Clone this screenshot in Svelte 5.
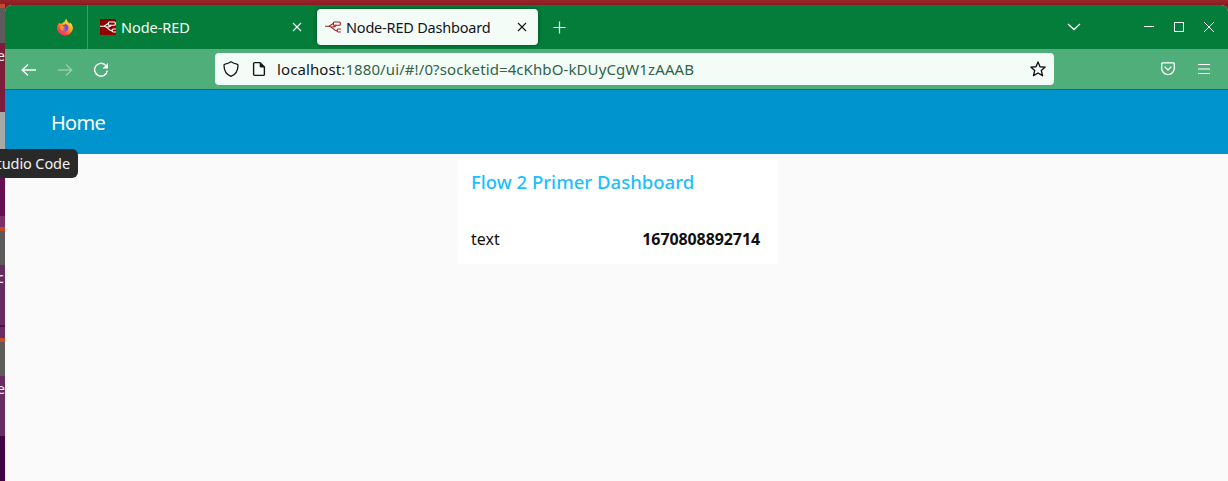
<script>
  const url = { host: 'localhost', rest: ':1880/ui/#!/0?socketid=4cKhbO-kDUyCgW1zAAAB' };
  const edge = [
    ['#8f2127', 4], ['#c9472a', 4], ['#5f5b5a', 35], ['#7e1c3c', 69, 'e'], ['#aaa8a5', 37],
    ['#302330', 29], ['#640f4f', 38], ['#7b3067', 11], ['#c84525', 4], ['#5d5b59', 34],
    ['#672b62', 60, 'c'], ['#461544', 2], ['#6c2b62', 11], ['#c84b2b', 4], ['#5d5c59', 34],
    ['#672c62', 60, 'e'], ['#420543', 45]
  ];
</script>

{#snippet flow(color)}
  <svg class="flow" width="16" height="16" viewBox="0 0 16 16" fill="none" stroke={color} stroke-width="1.15">
    <path d="M0 7.2h3.6C6.2 7.2 6 4.600 8.700 4.600M3.600 7.200c4.400 0 4.500 4.700 8.600 4.700" />
    <rect x="8.300" y="3" width="7" height="3.200" rx="1" />
    <path d="M5.800 8c2.800.2 4.800-.2 5.600-2M16 10h-2.700c-1.600 0-1.600 3 0 3H16" />
  </svg>
{/snippet}

{#snippet close()}
  <svg width="10" height="10" viewBox="0 0 10 10" fill="none" stroke="currentColor" stroke-width="1.1"><path d="m1 1 8 8M9 1 1 9" /></svg>
{/snippet}

<div class="desktop">
  <div class="edge">
    {#each edge as [color, size, letter]}
      <div class="slice" style="background:{color};height:{size}px"><span>{letter ?? ''}</span></div>
    {/each}
  </div>

  <div class="window">
    <div class="tabs">
      <div class="pinned">
        <svg width="16" height="17" viewBox="0 0 16 17">
          <defs>
            <linearGradient id="flame" x1=".85" y1=".1" x2=".2" y2=".95"><stop stop-color="#ffee42" /><stop offset=".4" stop-color="#ffa41f" /><stop offset=".75" stop-color="#ff4a48" /><stop offset="1" stop-color="#e52880" /></linearGradient>
          </defs>
          <path fill="url(#flame)" d="M2.4 3.4c.4 1 .9 1.3 1.5 1.3.5-.4 1-.5 1.7-.6C6.2 3.2 7 2.7 7.7 2.6c.2-1 .9-2 2-2.5-.1 2 1.200 2.600 2 3.600l.5 1.300.6-1.500c2 1.300 3.200 3.400 3.100 6A7.900 7.900 0 0 1 8 16.600C3.600 16.600.1 13.400.1 9.100c0-2.200.8-4.200 2.300-5.700Z" />
          <path fill="#7846d8" d="M5 7.600c.5-1.100 1.700-1.800 3-1.800l-.6-.9c2-.2 4.200 1.300 4.100 3.900 0 2-1.500 3.600-3.700 3.600-1.800 0-3-1.100-3.200-2.500l2.600-.3 1.300-.9Z" />
          <path fill="#ff9b22" d="M3 6.700c1.600-.5 2.700.1 3 .8l1.700.1c-.2.9-1.700 1.100-1.800 1.900 0 1 1.800 1.400 3 .6-1 2.200-4.800 1.900-5.600-.4Z" />
        </svg>
      </div>
      <div class="tab first">
        <span class="redicon">{@render flow('#fff')}</span>
        <span class="title t1">Node-RED</span>
        <span class="x">{@render close()}</span>
      </div>
      <div class="tab active">
        <span class="plainicon">{@render flow('#a52026')}</span>
        <span class="title t2">Node-RED Dashboard</span>
        <span class="x">{@render close()}</span>
      </div>
      <svg class="plus" width="13" height="13" viewBox="0 0 13 13" stroke="#fff" stroke-width="1.2"><path d="M6.500.5v12M.5 6.500h12" /></svg>
      <div class="controls">
        <svg width="14" height="10" viewBox="0 0 14 10" fill="none" stroke="#fff" stroke-width="1.3"><path d="m1 2 6 5.600L13 2" /></svg>
        <svg class="min" width="10" height="10" viewBox="0 0 10 10" stroke="#fff"><path d="M0 4.500h10" /></svg>
        <svg class="max" width="10" height="10" viewBox="0 0 10 10" fill="none" stroke="#fff"><path d="M.5.5h9v9h-9z" /></svg>
        <svg class="end" width="10" height="10" viewBox="0 0 10 10" stroke="#fff"><path d="m0 0 10 10M10 0 0 10" /></svg>
      </div>
    </div>

    <div class="toolbar">
      <div class="nav">
        <svg width="16" height="16" viewBox="0 0 16 16" fill="none" stroke="#fff" stroke-width="1.3"><path d="M15 8H1.500M7 2.500 1.200 8 7 13.500" /></svg>
        <svg class="dim" width="16" height="16" viewBox="0 0 16 16" fill="none" stroke="#fff" stroke-width="1.300"><path d="M1 8h13.500M9 2.500 14.800 8 9 13.500" /></svg>
        <svg width="16" height="16" viewBox="0 0 16 16"><path d="M12.700 3.400A6.400 6.400 0 1 0 14.300 8.700" fill="none" stroke="#fff" stroke-width="1.400" /><path d="M15 1v5.500H9.500Z" fill="#fff" /></svg>
      </div>
      <div class="address">
        <svg width="16" height="16" viewBox="0 0 16 16" fill="none" stroke="#15141a" stroke-width="1.300" stroke-linejoin="round"><path d="M8 .8c-1.800 1.300-4.200 2.100-6 2.300-.6 0-1 .5-1 1.100C1 9.900 3.600 13.600 8 15.400c4.400-1.800 7-5.500 7-11.200 0-.6-.4-1.100-1-1.100C12.200 2.900 9.800 2.100 8 .8Z" /></svg>
        <svg class="page" width="14" height="16" viewBox="0 0 14 16"><path d="M2.800 1.600H8L12.400 6v7.200c0 .7-.5 1.200-1.200 1.200H2.800c-.7 0-1.200-.5-1.200-1.200V2.800c0-.7.5-1.200 1.200-1.200Z" fill="none" stroke="#15141a" stroke-width="1.400" /><path d="M7.700 1.200 13 6.500H8.900c-.7 0-1.200-.5-1.200-1.200Z" fill="#15141a" /></svg>
        <span class="url"><b>{url.host}</b>{url.rest}</span>
        <svg class="star" width="16" height="16" viewBox="0 0 16 16" fill="none" stroke="#15141a" stroke-width="1.400" stroke-linejoin="round"><path d="m8 1 2 4.700 5.200.4-3.900 3.500 1.200 5.100L8 12l-4.500 2.700 1.200-5.100L.8 6.100 6 5.700Z" /></svg>
      </div>
      <div class="tools">
        <svg width="14" height="14" viewBox="0 0 14 14" fill="none" stroke="#fff" stroke-width="1.300" stroke-linecap="round" stroke-linejoin="round"><path d="M1.700.8h10.600c.6 0 1 .4 1 1v4.400c0 3.600-2.800 6.400-6.300 6.400S.7 9.800.7 6.200V1.800c0-.6.4-1 1-1ZM4 5l3 3 3-3" /></svg>
        <svg width="12" height="12" viewBox="0 0 12 12" stroke="#fff" stroke-width="1.200"><path d="M0 1.500h12M0 6h12M0 10.500h12" /></svg>
      </div>
    </div>

    <header><h1>Home</h1></header>
    <main>
      <section>
        <h2>Flow 2 Primer Dashboard</h2>
        <div class="row"><span class="label">text</span><strong>1670808892714</strong></div>
      </section>
    </main>
  </div>
  <div class="tip"><span>tudio Code</span></div>
</div>

<style>
  :global(body) { margin: 0; }
  .desktop { box-sizing: border-box; position: relative; display: flex; width: 1228px; height: 481px; overflow: hidden; background: linear-gradient(#972429, #871d24 5px); font-family: "Noto Sans", sans-serif; }
  svg { display: block; flex: none; }
  .edge { width: 5px; flex: none; overflow: hidden; }
  .slice { display: flex; overflow: hidden; color: #eee; font-size: 14px; line-height: 26px; }
  .slice span { margin-left: -3px; }
  .window { flex: 1; display: flex; flex-direction: column; margin-top: 5px; border-radius: 7px 7px 0 0; overflow: hidden; background: #fafafa; }
  .tabs { display: flex; align-items: center; height: 44px; flex: none; background: #047d3a; color: #f3fcf7; }
  .pinned { box-sizing: border-box; display: flex; align-items: center; width: 83px; height: 44px; padding-left: 52px; border-right: 1px solid #3b9b65; }
  .tab { box-sizing: border-box; display: flex; align-items: center; width: 221px; height: 36px; border-radius: 4px; }
  .first { margin-left: 4px; padding: 0 11px 0 8px; }
  .active { margin-left: 4px; padding: 0 11px 0 8px; background: #f3fcf7; color: #15141a; box-shadow: 0 0 4px #0006; }
  .redicon, .plainicon { display: block; width: 16px; height: 16px; border-radius: 1px; }
  .redicon { background: #8f0000; }
  .title { margin-left: 5px; font-size: 14.500px; line-height: 20px; white-space: nowrap; }
  .t1 { letter-spacing: -.05px; }
  .t2 { letter-spacing: -.2px; }
  .x { margin-left: auto; }
  .plus { margin-left: 15px; }
  .controls { display: flex; align-items: center; margin-left: auto; padding-right: 14px; }
  .min { margin-left: 63px; }
  .max, .end { margin-left: 20px; }
  .toolbar { box-sizing: border-box; display: flex; align-items: center; height: 41px; flex: none; border-bottom: 1px solid #04803c; background: #4fae7a; }
  .nav { display: flex; gap: 20px; margin-top: 1px; padding-left: 16px; }
  .dim { opacity: .4; }
  .address { box-sizing: border-box; display: flex; align-items: center; width: 839px; height: 32px; margin-left: 106px; padding: 0 8px; border-radius: 4px; background: #f3fcf7; }
  .page { margin-left: 13px; }
  .url { margin-left: 11px; color: #33634a; font-size: 15px; letter-spacing: .1px; white-space: nowrap; }
  .url b { color: #15141a; font-weight: 400; }
  .star { margin-left: auto; }
  .tools { display: flex; align-items: center; gap: 23px; margin-left: auto; padding-right: 18px; }
  header { display: flex; align-items: center; height: 64px; flex: none; padding-left: 46px; background: #0094ce; }
  h1 { margin: 2px 0 0; color: #fff; font-size: 20px; line-height: 28px; font-weight: 400; letter-spacing: -.7px; }
  main { flex: 1; padding: 6px 0 0 453px; background: #fafafa; }
  section { box-sizing: border-box; width: 320px; height: 104px; padding: 9px 17px 0 13px; background: #fff; }
  h2 { margin: 0; color: #1bbfff; font-size: 18.500px; line-height: 26px; font-weight: 500; white-space: nowrap; letter-spacing: .02px; }
  .row { display: flex; justify-content: space-between; margin-top: 32px; color: #111; font-size: 16px; line-height: 24px; }
  .row strong { letter-spacing: -.1px; margin-right: 1px; }
  .tip { position: absolute; left: 0; top: 149px; box-sizing: border-box; display: flex; justify-content: flex-end; width: 78px; height: 29px; padding-right: 8px; overflow: hidden; border-radius: 0 6px 6px 0; background: #292929; color: #f2f2f2; font-size: 14.500px; line-height: 29px; white-space: nowrap; letter-spacing: -.1px; }
</style>
